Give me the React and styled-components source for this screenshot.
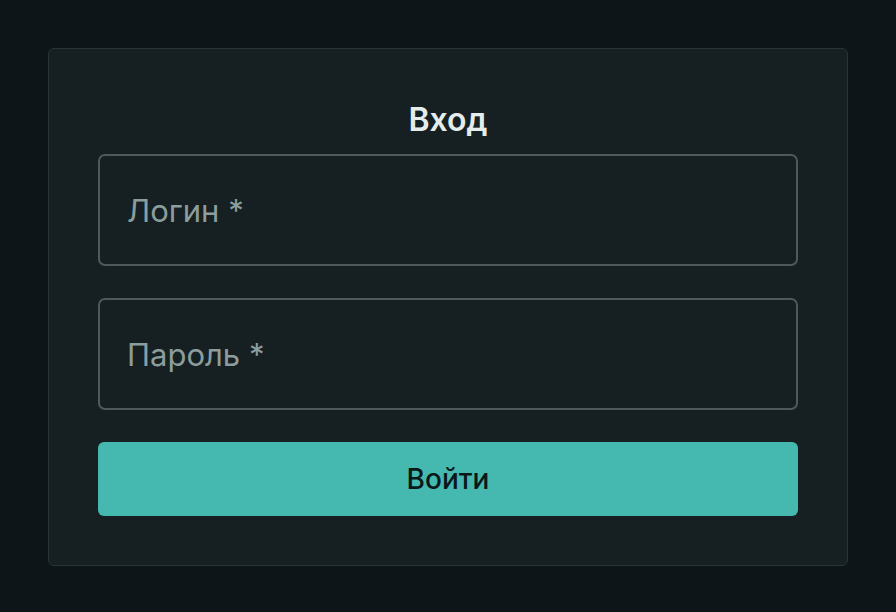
import React from "react";
import styled, { createGlobalStyle } from "styled-components";

const Global = createGlobalStyle`
  html, body { margin: 0; padding: 0; background: #0e1518; }
  body { font-family: Inter, "Noto Sans", sans-serif; }
  * { box-sizing: border-box; }
`;

const Page = styled.div`
  width: 896px;
  height: 612px;
  padding: 48px;
  background: #0e1518;
`;

const Card = styled.form`
  width: 800px;
  height: 518px;
  background: #162022;
  border: 1px solid #283435;
  border-radius: 6px;
  padding: 48px 49px;
  display: flex;
  flex-direction: column;
`;

const Title = styled.h1`
  margin: 0 0 12px;
  font-size: 32px;
  line-height: 45px;
  font-weight: 600;
  color: #e4ecec;
  text-align: center;
`;

const Fields = styled.div`
  display: flex;
  flex-direction: column;
  gap: 32px;
`;

const Input = styled.input`
  width: 700px;
  height: 112px;
  padding: 0 27px;
  background: transparent;
  border: 2px solid #4d595a;
  border-radius: 7px;
  font-family: Inter, "Noto Sans", sans-serif;
  font-size: 31px;
  color: #e4ecec;
  outline: none;
  &::placeholder { color: #8b9d9d; opacity: 1; }
`;

const Button = styled.button`
  width: 700px;
  height: 74px;
  border: none;
  border-radius: 6px;
  background: #45b8b0;
  color: #0b1819;
  font-family: Inter, "Noto Sans", sans-serif;
  font-size: 28px;
  font-weight: 500;
  cursor: pointer;
`;

export default function App() {
  return (
    <>
      <Global />
      <Page>
        <Card onSubmit={(e) => e.preventDefault()}>
          <Title>Вход</Title>
          <Fields>
            <Input placeholder="Логин *" />
            <Input type="password" placeholder="Пароль *" />
            <Button type="submit">Войти</Button>
          </Fields>
        </Card>
      </Page>
    </>
  );
}
